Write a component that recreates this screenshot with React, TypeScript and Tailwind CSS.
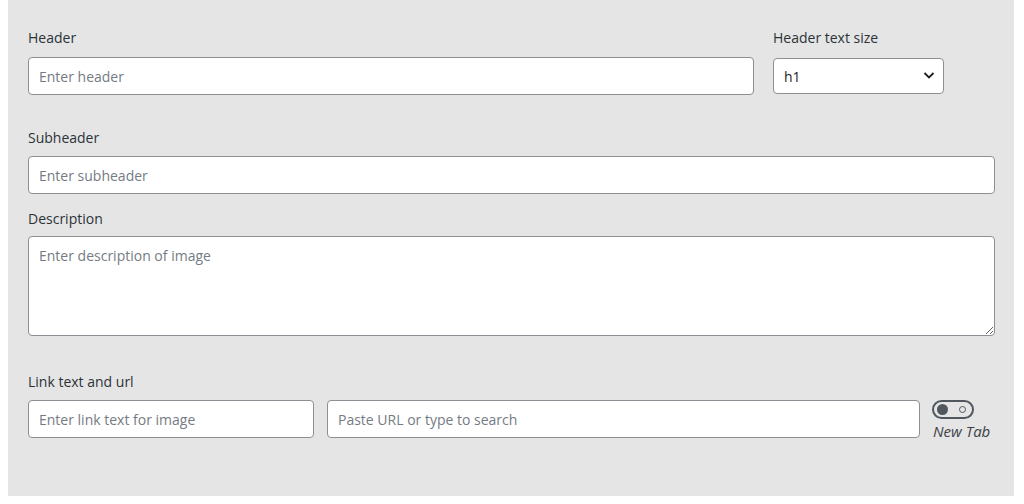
import React from 'react';

const font = { fontFamily: '"Segoe UI", "Open Sans", "Noto Sans", sans-serif' };

const inputCls =
  'block h-[38px] rounded-[4px] border border-[#8c8f94] bg-white px-[10px] text-[14px] text-[#1e1e1e] placeholder:text-[#757b83] outline-none';

const Label: React.FC<{ children: React.ReactNode }> = ({ children }) => (
  <label className="block h-5 text-[14px] leading-5 text-[#2c3338]">{children}</label>
);

const NewTabToggle: React.FC = () => (
  <div className="flex w-[66px] flex-col items-start pl-[4px]">
    <div className="flex h-[19px] w-[42px] items-center justify-between rounded-full border-[2px] border-[#50575e] px-[3px]">
      <span className="h-[11px] w-[11px] rounded-full bg-[#50575e]" />
      <span className="mr-[3px] h-[7px] w-[7px] rounded-full border-[1.5px] border-[#50575e]" />
    </div>
    <span className="mt-[2px] pl-[1px] text-[15px] italic leading-5 text-[#3c434a]">New Tab</span>
  </div>
);

export default function App() {
  return (
    <div className="bg-white" style={font}>
      <div className="ml-2 h-[496px] w-[1006px] bg-[#e5e5e5] pl-5 pr-[19px] pt-7">
        {/* header row */}
        <div className="flex gap-[19px]">
          <div className="w-[726px]">
            <Label>Header</Label>
            <input className={`${inputCls} mt-[9px] w-full`} placeholder="Enter header" />
          </div>
          <div className="w-[171px]">
            <Label>Header text size</Label>
            <div className="relative mt-[10px]">
              <select className="h-[36px] w-full appearance-none rounded-[4px] border border-[#8c8f94] bg-white pl-[10px] text-[14px] text-[#1e1e1e] outline-none">
                <option>h1</option>
                <option>h2</option>
                <option>h3</option>
              </select>
              <svg
                className="pointer-events-none absolute right-[9px] top-[13px]"
                width="12"
                height="9"
                viewBox="0 0 12 9"
                fill="none"
              >
                <path d="M1.5 2 6 6.5 10.5 2" stroke="#1e1e1e" strokeWidth="1.8" />
              </svg>
            </div>
          </div>
        </div>

        {/* subheader */}
        <div className="mt-[33px]">
          <Label>Subheader</Label>
          <input className={`${inputCls} mt-[8px] w-full`} placeholder="Enter subheader" />
        </div>

        {/* description */}
        <div className="mt-[15px]">
          <Label>Description</Label>
          <textarea
            className="mt-[7px] block h-[100px] w-full rounded-[4px] border border-[#8c8f94] bg-white px-[10px] py-[9px] text-[14px] leading-5 text-[#1e1e1e] placeholder:text-[#757b83] outline-none"
            placeholder="Enter description of image"
          />
        </div>

        {/* link */}
        <div className="mt-[36px]">
          <Label>Link text and url</Label>
          <div className="mt-[8px] flex items-start">
            <input className={`${inputCls} w-[286px] shrink-0`} placeholder="Enter link text for image" />
            <input className={`${inputCls} ml-[13px] w-[593px] shrink-0`} placeholder="Paste URL or type to search" />
            <div className="ml-[8px]">
              <NewTabToggle />
            </div>
          </div>
        </div>
      </div>
    </div>
  );
}
